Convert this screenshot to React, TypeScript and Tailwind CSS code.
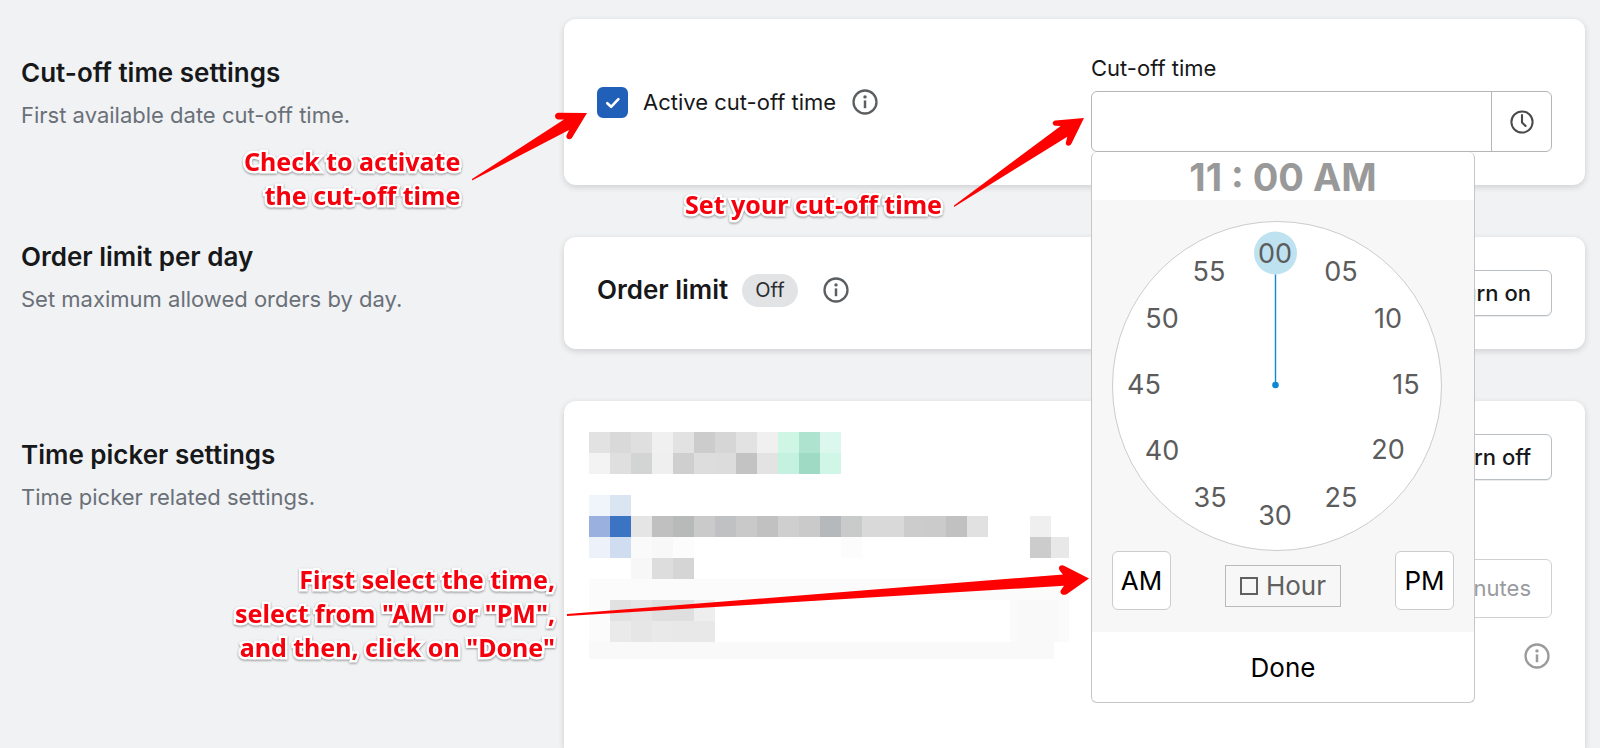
import { useState, type ReactNode } from "react";

const MINUTES = ["00", "05", "10", "15", "20", "25", "30", "35", "40", "45", "50", "55"];
const DIAL_RADIUS = 131;

const CELL = 21;
const MOSAIC: { row: number; col: number; colors: string[] }[] = [
  { row: 0, col: 0, colors: ["#e2e2e2", "#d9d9d9", "#dfdfdf", "#f0f0f0", "#e2e2e2", "#cccccc", "#d6d6d6", "#e2e2e2", "#f0f0f0", "#cff5e5", "#aee4cf", "#dcf8ee"] },
  { row: 1, col: 0, colors: ["#f3f3f3", "#dfdfdf", "#d3d5d5", "#efefef", "#cfcfcf", "#dddddd", "#dcdcdc", "#c3c3c3", "#e3e3e3", "#c5f1e1", "#9edac4", "#d0f6e7"] },
  { row: 3, col: 0, colors: ["#f0f5fc", "#dbe4f1"] },
  { row: 4, col: 0, colors: ["#9ab1e0", "#3c74c4", "#e5e5e5", "#c0c0c0", "#b8baba", "#cacaca", "#bfc1c3", "#c9c9c9", "#c1c1c1", "#cfcfcf", "#cacaca", "#b6b9bb", "#c9cbcb", "#d9d9d9", "#d9d9d9", "#cccccc", "#cbcbcb", "#c1c1c1", "#e1e1e1"] },
  { row: 4, col: 21, colors: ["#efefef"] },
  { row: 5, col: 0, colors: ["#ecf1fa", "#d0ddf0", "#fafafa", "#f8f8f8", "#fcfcfc"] },
  { row: 5, col: 12, colors: ["#fcfcfc"] },
  { row: 5, col: 21, colors: ["#cccccc", "#e8e8e8"] },
  { row: 6, col: 2, colors: ["#f7f7f7", "#dddddd", "#d5d5d5"] },
  { row: 8, col: 1, colors: ["#e1e1e1", "#e5e5e5", "#dfdfdf", "#dfdfdf", "#eeeeee"] },
  { row: 9, col: 1, colors: ["#eaeaea", "#e6e6e6", "#e9e9e9", "#e8e8e8", "#e8e8e8"] },
];

function InfoIcon({ className }: { className: string }) {
  return (
    <svg viewBox="0 0 26 26" className={"size-[26px] shrink-0 " + className} aria-hidden="true">
      <circle cx="13" cy="13" r="11.5" fill="none" stroke="currentColor" strokeWidth="2.3" />
      <circle cx="13" cy="7.9" r="1.7" fill="currentColor" />
      <path d="M13 11.4v7.8" stroke="currentColor" strokeWidth="2.5" />
    </svg>
  );
}

function ClockIcon() {
  return (
    <svg viewBox="0 0 24 24" className="size-6 text-[#4a4a4a]" aria-hidden="true">
      <circle cx="12" cy="12" r="10.6" fill="none" stroke="currentColor" strokeWidth="2" />
      <path d="M12 5v7.4l3.6 3.6" fill="none" stroke="currentColor" strokeWidth="2.1" strokeLinecap="round" strokeLinejoin="round" />
    </svg>
  );
}

function Section({ title, text, offset, grow, children }: {
  title: string;
  text: string;
  offset: string;
  grow?: boolean;
  children: ReactNode;
}) {
  return (
    <section className={"grid grid-cols-[543px_minmax(0,1fr)] " + (grow ? "flex-1" : "")}>
      <div className={offset}>
        <h2 className="text-[26px] leading-8 font-semibold text-[#17181a]">{title}</h2>
        <p className="mt-2.5 text-[22px] leading-8 text-[#6a7078]">{text}</p>
      </div>
      <div className={"bg-white px-[33px] py-[33px] shadow-[0_2px_6px_rgba(23,24,24,0.16)] " + (grow ? "rounded-t-xl" : "rounded-xl")}>
        {children}
      </div>
    </section>
  );
}

function TimePopup() {
  const [minute, setMinute] = useState("00");
  const angle = MINUTES.indexOf(minute) * 30;
  return (
    <div className="absolute top-full left-0 z-10 w-[384px] rounded-md border border-t-0 border-[#c6c6c8] bg-white">
      <div className="flex h-12 items-center justify-center pt-0.5 text-[38px] leading-none font-bold text-[#999999]">11 : 00 AM</div>
      <div className="bg-[#f7f7f7] px-5 pt-[21px] pb-[22px]">
        <div className="relative size-[330px] rounded-full border border-[#cccccc] bg-white">
          <svg viewBox="0 0 328 328" className="absolute inset-0 size-full" aria-hidden="true">
            <g transform={`rotate(${angle} 162.5 163)`} fill="#0f87d3">
              <circle cx="162.5" cy="31" r="21.5" fill="#bfe2f1" />
              <path d="M162.5 52.5V163" stroke="#0f87d3" strokeWidth="1.4" />
              <circle cx="162.5" cy="163" r="3.3" />
            </g>
          </svg>
          {MINUTES.map((m, i) => {
            const a = (i * Math.PI) / 6;
            return (
              <button
                key={m}
                type="button"
                onClick={() => setMinute(m)}
                className="absolute flex size-11 -translate-1/2 items-center justify-center rounded-full text-[27px] text-[#5c5c5c]"
                style={{ left: Math.round(162 + DIAL_RADIUS * Math.sin(a)), top: Math.round(163 - DIAL_RADIUS * Math.cos(a)) }}
              >
                {m}
              </button>
            );
          })}
        </div>
        <div className="flex items-center justify-between">
          <button type="button" className="h-[59px] w-[59px] rounded-md border border-[#cccccc] bg-white text-[26px] text-black">AM</button>
          <button type="button" className="mt-2.5 flex h-[42px] items-center gap-2 border border-[#bbbbbb] bg-[#f7f7f7] px-3.5 text-[26px] text-[#606060]">
            <span className="size-[18px] border-2 border-[#606060]" />
            Hour
          </button>
          <button type="button" className="h-[59px] w-[59px] rounded-md border border-[#cccccc] bg-white text-[26px] text-black">PM</button>
        </div>
      </div>
      <button type="button" className="block h-[70px] w-full rounded-md text-[26px] text-black">Done</button>
    </div>
  );
}

function Mosaic() {
  return (
    <svg viewBox="0 0 480 227" className="-mt-0.5 -ml-2 h-[227px] w-[480px]" shapeRendering="crispEdges" aria-hidden="true">
      <path d="M0 147H480V168H0Z M0 168H21V210H0Z M421 168H480V210H421Z" fill="#fbfbfb" />
      <path d="M0 210H465V227H0Z M428 168H470V210H428Z" fill="#f9f9f9" />
      {MOSAIC.map(({ row, col, colors }) =>
        colors.map((color, i) => (
          <rect key={`${row}-${col + i}`} x={(col + i) * CELL} y={row * CELL} width={CELL} height={CELL} fill={color} />
        )),
      )}
    </svg>
  );
}

function Note({ className, lines }: { className: string; lines: string[] }) {
  return (
    <p
      className={
        "absolute z-20 text-right font-['Noto_Sans','Open_Sans',sans-serif] text-[25px] leading-[34px] font-bold whitespace-nowrap text-[#f5000c] [-webkit-text-stroke:5px_white] [paint-order:stroke_fill] drop-shadow-[0_1px_1px_rgba(0,0,0,0.4)] " +
        className
      }
    >
      {lines.map((line) => (
        <span key={line} className="block">{line}</span>
      ))}
    </p>
  );
}

const BUTTON = "h-[46px] rounded-md border border-[#babfc3] bg-white px-5 text-[22px] font-medium text-[#17181a] shadow-[0_1px_0_rgba(0,0,0,0.08)]";

export default function App() {
  const [active, setActive] = useState(true);
  return (
    <main className="relative flex min-h-screen flex-col gap-[52px] overflow-hidden bg-[#f1f2f4] pt-[19px] pr-[15px] pl-[21px] font-['Inter',sans-serif]">
      <Section title="Cut-off time settings" text="First available date cut-off time." offset="pt-[38px]">
        <div className="grid grid-cols-2 items-center gap-[33px]">
          <div className="flex items-center">
            <label className="flex items-center gap-[15px] text-[22px] leading-8 text-[#17181a]">
              <span className="relative size-[31px]">
                <input
                  type="checkbox"
                  checked={active}
                  onChange={(e) => setActive(e.target.checked)}
                  className="peer block size-full appearance-none rounded-[6px] border-2 border-[#8c9196] checked:border-[#2060b8] checked:bg-[#2060b8]"
                />
                <svg viewBox="0 0 31 31" className="pointer-events-none absolute inset-0 hidden size-full peer-checked:block" aria-hidden="true">
                  <path d="M10.3 16.2l3.8 3.6 7.3-7.6" fill="none" stroke="#fff" strokeWidth="2.6" strokeLinecap="round" strokeLinejoin="round" />
                </svg>
              </span>
              Active cut-off time
            </label>
            <InfoIcon className="ml-4 text-[#5c5f62]" />
          </div>
          <div>
            <label htmlFor="cutoff" className="mb-[7px] block text-[22px] leading-8 text-[#17181a]">Cut-off time</label>
            <div className="relative">
              <div className="flex h-[61px] overflow-hidden rounded-md border border-[#b3b5b8] bg-white">
                <input id="cutoff" type="text" className="min-w-0 flex-1 px-4 text-[22px] outline-none" />
                <button type="button" aria-label="Pick a time" className="flex w-[60px] items-center justify-center border-l border-[#b3b5b8]">
                  <ClockIcon />
                </button>
              </div>
              <TimePopup />
            </div>
          </div>
        </div>
      </Section>

      <Section title="Order limit per day" text="Set maximum allowed orders by day." offset="pt-1">
        <div className="flex items-start justify-between">
          <div className="flex h-10 items-center">
            <h3 className="text-[26px] leading-8 font-semibold text-[#17181a]">Order limit</h3>
            <span className="ml-3.5 flex h-[33px] items-center rounded-full bg-[#e1e3e5] px-[13px] text-[20px] text-[#2b2d30]">Off</span>
            <InfoIcon className="ml-[25px] text-[#5c5f62]" />
          </div>
          <button type="button" className={BUTTON}>Turn on</button>
        </div>
      </Section>

      <Section title="Time picker settings" text="Time picker related settings." offset="pt-[38px]" grow>
        <div className="grid grid-cols-2 gap-[33px]">
          <Mosaic />
          <div className="flex flex-col items-end">
            <button type="button" className={BUTTON}>Turn off</button>
            <div className="mt-[79px] flex h-[59px] w-full items-center rounded-md border border-[#cfd2d4] px-5">
              <input type="text" aria-label="Interval" disabled className="min-w-0 flex-1 text-[22px]" />
              <span className="text-[22px] text-[#999c9f]">minutes</span>
            </div>
            <InfoIcon className="mt-[25px] mr-0.5 text-[#9b9b9b]" />
          </div>
        </div>
      </Section>

      <svg className="pointer-events-none absolute top-0 left-0 z-20 h-[748px] w-[1600px]" viewBox="0 0 1600 748" fill="#ff0000" aria-hidden="true">
        <path d="M472 180.500L472 179L564 119.400L558 119.400C554 119 554 113.200 558 112.700L587 113L572.500 137C570.500 141 565.500 139 566.500 135.500L569 130Z" />
        <path d="M954 207L954 205.500L1060.700 126L1055.500 125.800C1051.500 125 1052 121 1055.500 120.500L1084 118L1071.500 143.500C1069.500 147.500 1065 145.500 1065.900 142.500L1067.300 136.700Z" />
        <path d="M567 616L567 614L1063 574.500L1060 571C1057 567 1061 563.500 1064.500 566L1089 578.500L1067 594C1063 596.500 1059 593 1061 590L1064 585.700Z" />
      </svg>

      <Note className="top-[144px] left-[244px]" lines={["Check to activate", "the cut-off time"]} />
      <Note className="top-[187px] left-[685px]" lines={["Set your cut-off time"]} />
      <Note className="top-[562px] left-[235px]" lines={["First select the time,", "select from \"AM\" or \"PM\",", "and then, click on \"Done\""]} />
    </main>
  );
}
